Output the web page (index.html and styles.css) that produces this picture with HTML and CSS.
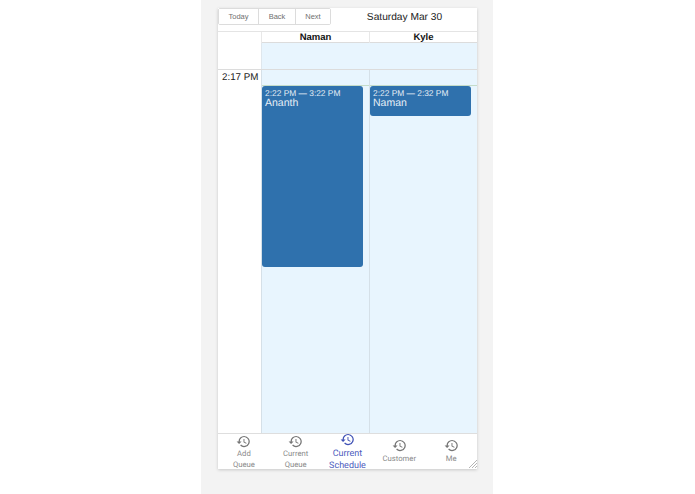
FILE: index.html
```html
<!DOCTYPE html>
<html lang="en">
<head>
<meta charset="utf-8">
<title>Current Schedule</title>
<link rel="stylesheet" href="styles.css">
</head>
<body>
<svg class="sprite" width="0" height="0" aria-hidden="true">
  <symbol id="history" viewBox="0 0 24 24">
    <path d="M13 3a9 9 0 0 0-9 9H1l3.89 3.89.07.14L9 12H6a7 7 0 1 1 2.05 4.95l-1.42 1.42A9 9 0 1 0 13 3zm-1 5v5l4.28 2.54.72-1.21-3.5-2.08V8H12z"/>
  </symbol>
</svg>
<main class="backdrop">
  <div class="app">
    <header class="toolbar">
      <div class="btn-group">
        <button class="btn">Today</button>
        <button class="btn">Back</button>
        <button class="btn">Next</button>
      </div>
      <h1 class="date">Saturday Mar 30</h1>
    </header>
    <div class="names">
      <div class="gutter"></div>
      <div class="name">Naman</div>
      <div class="name">Kyle</div>
    </div>
    <div class="allday">
      <div class="gutter"></div>
      <div class="allday-fill"></div>
    </div>
    <div class="grid">
      <div class="time-col"><span class="time">2:17 PM</span></div>
      <div class="col">
        <div class="now"></div>
        <article class="event event-long">
          <div class="event-time">2:22 PM — 3:22 PM</div>
          <div class="event-title">Ananth</div>
        </article>
      </div>
      <div class="col">
        <div class="now"></div>
        <article class="event event-short">
          <div class="event-time">2:22 PM — 2:32 PM</div>
          <div class="event-title">Naman</div>
        </article>
      </div>
    </div>
    <nav class="tabs">
      <a class="tab tab-up"><svg class="tab-icon"><use href="#history"/></svg><span>Add<br>Queue</span></a>
      <a class="tab tab-up"><svg class="tab-icon"><use href="#history"/></svg><span>Current<br>Queue</span></a>
      <a class="tab tab-active"><svg class="tab-icon"><use href="#history"/></svg><span>Current<br>Schedule</span></a>
      <a class="tab"><svg class="tab-icon"><use href="#history"/></svg><span>Customer</span></a>
      <a class="tab"><svg class="tab-icon"><use href="#history"/></svg><span>Me</span></a>
      <svg class="grip" width="8" height="8" viewBox="0 0 8 8"><path d="M8 0 0 8M8 3 3 8M8 6 6 8" stroke="#b4b4b4" stroke-width="1" fill="none"/></svg>
    </nav>
  </div>
</main>
</body>
</html>
```
FILE: styles.css
```css
* { box-sizing: border-box; }
html, body { margin: 0; height: 100%; background: #fff; }
body {
  font-family: "Liberation Sans", Arial, sans-serif;
  overflow: hidden;
  text-rendering: geometricPrecision;
}
.sprite { position: absolute; }
.backdrop {
  width: 292px;
  height: 494px;
  margin-left: 201px;
  padding: 8px 16px 25px 17px;
  background: #f3f3f3;
}
.app {
  display: flex;
  flex-direction: column;
  width: 259px;
  height: 461px;
  background: #fff;
  box-shadow: 0 1px 3px rgba(0, 0, 0, .18);
}
.toolbar { display: flex; align-items: flex-start; height: 23px; flex: none; }
.btn-group {
  display: flex;
  flex: none;
  width: 113px;
  height: 17px;
  border: 1px solid #dcdcdc;
  border-radius: 2px;
}
.btn {
  flex: 1 1 auto;
  padding: 0;
  border: 0;
  border-right: 1px solid #dcdcdc;
  background: #fff;
  color: #707070;
  font: 7.5px "Liberation Sans", Arial, sans-serif;
}
.btn:nth-child(1) { flex: 0 0 40px; }
.btn:nth-child(2) { flex: 0 0 37px; }
.btn:last-child { border-right: 0; }
.date {
  flex: 1;
  margin: 0;
  text-align: center;
  color: #222;
  font-size: 10.2px;
  font-weight: 400;
  line-height: 17px;
  padding: 1px 0 0 1px;
}
.names {
  display: grid;
  grid-template-columns: 43px 108px 108px;
  flex: none;
  height: 12px;
  border-top: 1px solid #e4e4e4;
  border-bottom: 1px solid #dcdcdc;
}
.gutter { background: #fff; }
.name {
  border-left: 1px solid #e8e8e8;
  text-align: center;
  color: #111;
  font-size: 9.5px;
  font-weight: 700;
  line-height: 12px;
}
.allday {
  display: grid;
  grid-template-columns: 43px 1fr;
  flex: none;
  height: 27px;
  border-bottom: 1px solid #dcdcdc;
}
.allday-fill { background: #e8f5fe; border-left: 1px solid #dfe7ed; }
.grid {
  display: grid;
  grid-template-columns: 43px 108px 108px;
  flex: 1;
  min-height: 0;
}
.time-col { background: #fff; padding: 2px 0 0 4px; white-space: nowrap; }
.time { display: block; color: #222; font-size: 9.8px; line-height: 12px; }
.col {
  position: relative;
  background: #e8f5fe;
  border-left: 1px solid #d5e0e8;
}
.now {
  position: absolute;
  left: 0;
  right: 0;
  top: 15px;
  border-top: 1px solid #c5dcc9;
}
.event {
  position: absolute;
  top: 16px;
  left: 0;
  padding: 2px 3px;
  background: #2f71ad;
  border-radius: 3px;
  color: #e6eef6;
}
.event-long { width: 101px; height: 181px; }
.event-short { width: 101px; height: 30px; }
.event-time { font-size: 8.4px; line-height: 10px; }
.event-title { font-size: 10.5px; line-height: 11px; }
.tabs {
  position: relative;
  display: grid;
  grid-template-columns: repeat(5, 1fr);
  flex: none;
  height: 36px;
  border-top: 1px solid #dedede;
}
.tab {
  display: flex;
  flex-direction: column;
  align-items: center;
  padding-top: 4px;
  color: #8a8a8a;
  font: 7.7px/11px Roboto, "Liberation Sans", sans-serif;
  text-align: center;
}
.tab-up { padding-top: 0; }
.tab-icon { width: 15px; height: 15px; flex: none; fill: #757575; }
.tab-up .tab-icon { margin-bottom: -1px; }
.tab-active {
  padding-top: 0;
  color: #4b5bbd;
  font-size: 9px;
  line-height: 11.5px;
}
.tab-active .tab-icon { fill: #3f51b5; margin: -2px 0 2px; }
.grip { position: absolute; right: 0; bottom: 1px; }
```
